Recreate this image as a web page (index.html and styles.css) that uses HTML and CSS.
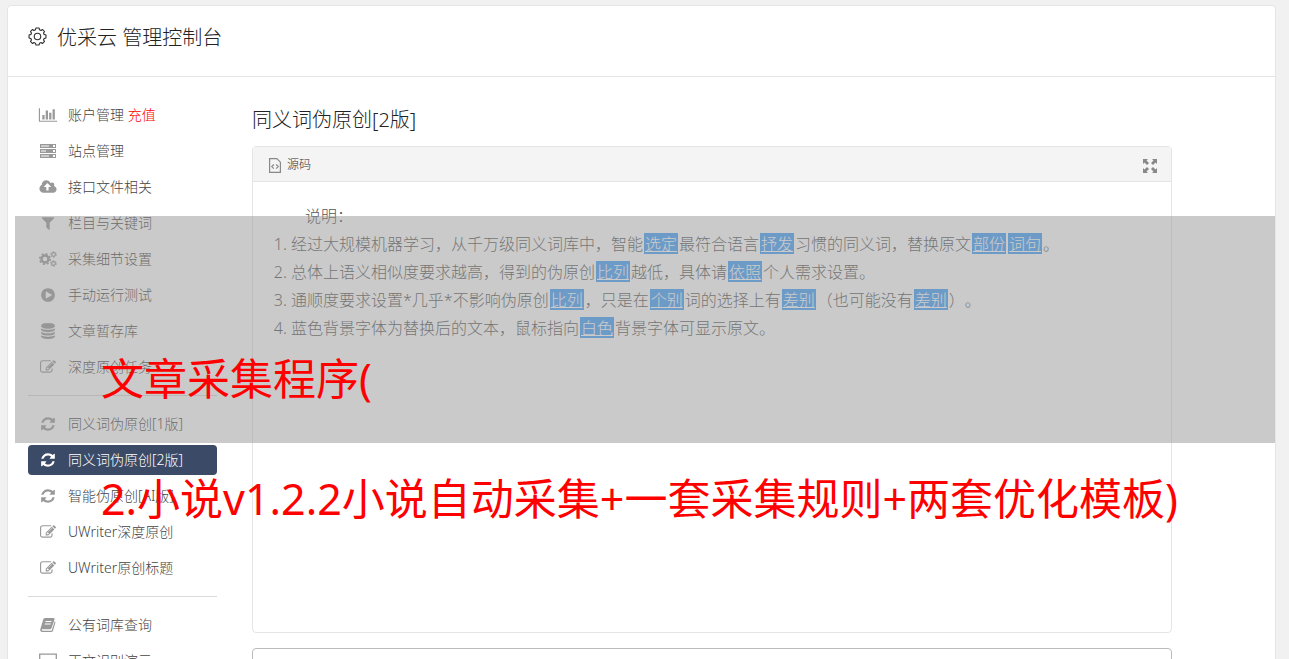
FILE: index.html
```html
<!DOCTYPE html>
<html lang="zh-CN">
<head>
    <meta charset="UTF-8">
    <meta name="viewport" content="width=device-width, initial-scale=1.0">
    <title>优采云 管理控制台</title>
    <link rel="stylesheet" href="styles.css">
</head>
<body>

    <!-- shared icons -->
    <svg class="icon-defs" aria-hidden="true">
        <symbol id="i-gear" viewBox="-10 -10 20 20">
            <path d="M-1.6-8.9H1.6L2.2-7 3.7-6.3 5.2-7.4 7.4-5.2 6.3-3.7 7-2.2 8.9-1.6V1.6L7 2.2 6.3 3.7 7.4 5.2 5.2 7.4 3.7 6.3 2.2 7 1.6 8.9H-1.6L-2.2 7-3.7 6.3-5.2 7.4-7.4 5.2-6.3 3.7-7 2.2-8.9 1.6V-1.6L-7-2.2-6.3-3.7-7.4-5.2-5.2-7.4-3.7-6.3-2.2-7Z" fill="none" stroke="currentColor" stroke-width="1.2" stroke-linejoin="round"/>
            <circle r="3.4" fill="none" stroke="currentColor" stroke-width="1.2"/>
        </symbol>
        <symbol id="i-chart" viewBox="0 0 2048 1792">
            <path d="M640 896v512h-256v-512h256zm384-512v1024h-256v-1024h256zm1024 1152v128h-2048v-1536h128v1408h1920zm-640-896v768h-256v-768h256zm384-384v1152h-256v-1152h256z"/>
        </symbol>
        <symbol id="i-server" viewBox="0 0 18 16">
            <path fill-rule="evenodd" d="M1 1h16v4H1zM2 2.500h8v1H2zM14 2v2h2V2zM1 6h16v4H1zM2 7.500h5v1H2zM14 7v2h2V7zM1 11h16v4H1zM2 12.500h8v1H2zM14 12v2h2v-2z"/>
        </symbol>
        <symbol id="i-cloud" viewBox="0 0 1920 1792">
            <path d="M1280 864q0-14-9-23l-352-352q-9-9-23-9t-23 9l-351 351q-10 12-10 24 0 14 9 23t23 9h224v352q0 13 9.500 22.500t22.500 9.500h192q13 0 22.500-9.500t9.500-22.500v-352h224q13 0 22.500-9.500t9.500-22.500zm640 288q0 159-112.500 271.500t-271.500 112.500h-1088q-185 0-316.500-131.500t-131.500-316.500q0-130 70-240t188-165q-2-30-2-43 0-212 150-362t362-150q156 0 285.500 87t188.500 231q71-62 166-62 106 0 181 75t75 181q0 76-41 138 130 31 213.500 135.500t83.500 238.500z"/>
        </symbol>
        <symbol id="i-filter" viewBox="0 0 1792 1792">
            <path d="M1595 295q17 41-14 70l-493 493v742q0 42-39 59-13 5-25 5-27 0-45-19l-256-256q-19-19-19-45v-486l-493-493q-31-29-14-70 17-39 59-39h1280q42 0 59 39z"/>
        </symbol>
        <symbol id="i-cogs" viewBox="0 0 18 16">
            <g fill="none" stroke="currentColor">
                <circle cx="6" cy="8" r="3.500" stroke-width="2.400"/>
                <circle cx="6" cy="8" r="5.200" stroke-width="1.600" stroke-dasharray="2.040 2.040"/>
                <circle cx="14.500" cy="3.500" r="1.800" stroke-width="1.200"/>
                <circle cx="14.500" cy="3.500" r="2.800" stroke-width="1" stroke-dasharray="1.470 1.460"/>
                <circle cx="14.500" cy="12.500" r="1.800" stroke-width="1.200"/>
                <circle cx="14.500" cy="12.500" r="2.800" stroke-width="1" stroke-dasharray="1.470 1.460"/>
            </g>
        </symbol>
        <symbol id="i-play" viewBox="0 0 1792 1792">
            <path d="M896 128q209 0 385.500 103t279.500 279.500 103 385.500-103 385.500-279.500 279.500-385.500 103-385.500-103-279.500-279.500-103-385.500 103-385.500 279.500-279.500 385.500-103zm384 823q32-18 32-55t-32-55l-544-320q-31-19-64-1-32 19-32 56v640q0 37 32 56 16 8 32 8 17 0 32-9z"/>
        </symbol>
        <symbol id="i-database" viewBox="0 0 1792 1792">
            <path d="M896 768q237 0 443-43t325-127v170q0 69-103 128t-280 93.500-385 34.500-385-34.500-280-93.500-103-128v-170q119 84 325 127t443 43zm0 768q237 0 443-43t325-127v170q0 69-103 128t-280 93.500-385 34.500-385-34.500-280-93.500-103-128v-170q119 84 325 127t443 43zm0-384q237 0 443-43t325-127v170q0 69-103 128t-280 93.500-385 34.500-385-34.500-280-93.500-103-128v-170q119 84 325 127t443 43zm0-1152q208 0 385 34.500t280 93.500 103 128v128q0 69-103 128t-280 93.500-385 34.500-385-34.500-280-93.500-103-128v-128q0-69 103-128t280-93.500 385-34.500z"/>
        </symbol>
        <symbol id="i-edit" viewBox="0 0 1792 1792">
            <path d="M888 1184l116-116-152-152-116 116v56h96v96h56zm440-720q-16-16-33 1l-350 350q-17 17-1 33t33-1l350-350q17-17 1-33zm80 594v190q0 119-84.500 203.500t-203.500 84.500h-832q-119 0-203.500-84.500t-84.500-203.500v-832q0-119 84.500-203.500t203.500-84.500h832q63 0 117 25 15 7 18 23 3 17-9 29l-49 49q-14 14-32 8-23-6-45-6h-832q-66 0-113 47t-47 113v832q0 66 47 113t113 47h832q66 0 113-47t47-113v-126q0-13 9-22l64-64q15-15 35-7t20 29zm-96-738l288 288-672 672h-288v-288zm444 132l-92 92-288-288 92-92q28-28 68-28t68 28l152 152q28 28 28 68t-28 68z"/>
        </symbol>
        <symbol id="i-refresh" viewBox="0 0 1792 1792">
            <path d="M1639 1056q0 5-1 7-64 268-268 434.500t-478 166.500q-146 0-282.500-55t-243.500-157l-129 129q-19 19-45 19t-45-19-19-45v-448q0-26 19-45t45-19h448q26 0 45 19t19 45-19 45l-137 137q71 66 161 102t187 36q134 0 250-65t186-179q11-17 53-117 8-23 30-23h192q13 0 22.500 9.500t9.500 22.500zm25-800v448q0 26-19 45t-45 19h-448q-26 0-45-19t-19-45 19-45l138-138q-148-137-349-137-134 0-250 65t-186 179q-11 17-53 117-8 23-30 23h-199q-13 0-22.500-9.500t-9.500-22.500v-7q65-268 270-434.500t480-166.500q146 0 284 55.500t245 156.500l130-129q19-19 45-19t45 19 19 45z"/>
        </symbol>
        <symbol id="i-book" viewBox="0 0 18 16">
            <path fill-rule="evenodd" d="M6 1h8.500q1.500 0 1 1.500L12.600 11q-.4 1.200-1.600 1.200H3.300q-.8 0-.6.8.2.8 1.100.8h8q.8 0 1.100-.9l2.800-8.700q1 .4.700 1.400L14 13.700q-.5 1.300-1.900 1.300H3.600Q1 15 1.200 12.500L4.200 2.600Q4.600 1 6 1zM6.600 4l-.3 1h6l.3-1zM5.900 6.500l-.3 1h6l.3-1z"/>
        </symbol>
        <symbol id="i-screen" viewBox="0 0 18 16">
            <path fill="none" stroke="currentColor" stroke-width="1.300" d="M.7 1.200h16.600v10.500H.7zM9 12v2.500M5 14.500h8"/>
        </symbol>
        <symbol id="i-code" viewBox="0 0 12 15">
            <path fill="none" stroke="currentColor" stroke-width="1.200" d="M.6.6h7.200l3.600 3.600v10.200H.6zM4.800 6.500 2.800 8.600l2 2.100M7.200 6.500l2 2.100-2 2.100"/>
        </symbol>
        <symbol id="i-expand" viewBox="0 0 14 14">
            <path d="M0 0h5L3.500 1.500 6 4 4 6 1.500 3.500 0 5zM14 0v5l-1.500-1.500L10 6 8 4l2.500-2.500L9 0zM0 14V9l1.500 1.500L4 8l2 2-2.500 2.500L5 14zM14 14H9l1.500-1.500L8 10l2-2 2.500 2.500L14 9z"/>
        </symbol>
    </svg>

    <div class="console">
        <header class="console-header">
            <svg class="gear"><use href="#i-gear"/></svg>
            <h1>优采云 管理控制台</h1>
        </header>

        <div class="console-body">
            <nav class="sidebar">
                <a href="#"><svg><use href="#i-chart"/></svg><span>账户管理 <em>充值</em></span></a>
                <a href="#"><svg><use href="#i-server"/></svg>站点管理</a>
                <a href="#"><svg><use href="#i-cloud"/></svg>接口文件相关</a>
                <a href="#"><svg><use href="#i-filter"/></svg>栏目与关键词</a>
                <a href="#"><svg><use href="#i-cogs"/></svg>采集细节设置</a>
                <a href="#"><svg><use href="#i-play"/></svg>手动运行测试</a>
                <a href="#"><svg><use href="#i-database"/></svg>文章暂存库</a>
                <a href="#"><svg><use href="#i-edit"/></svg>深度原创任务</a>
                <hr>
                <a href="#"><svg><use href="#i-refresh"/></svg>同义词伪原创[1版]</a>
                <a href="#" class="active"><svg><use href="#i-refresh"/></svg>同义词伪原创[2版]</a>
                <a href="#"><svg><use href="#i-refresh"/></svg>智能伪原创[AI版]</a>
                <a href="#"><svg><use href="#i-edit"/></svg>UWriter深度原创</a>
                <a href="#"><svg><use href="#i-edit"/></svg>UWriter原创标题</a>
                <hr>
                <a href="#"><svg><use href="#i-book"/></svg>公有词库查询</a>
                <a href="#"><svg><use href="#i-screen"/></svg>正文识别演示</a>
            </nav>

            <main class="content">
                <h2>同义词伪原创[2版]</h2>

                <section class="editor">
                    <div class="toolbar">
                        <button type="button"><svg class="code"><use href="#i-code"/></svg>源码</button>
                        <button type="button" aria-label="全屏"><svg class="expand"><use href="#i-expand"/></svg></button>
                    </div>
                    <div class="editor-text">
                        <p>说明：</p>
                        <ol>
                            <li>经过大规模机器学习，从千万级同义词库中，智能<mark>选定</mark>最符合语言<mark>抒发</mark>习惯的同义词，替换原文<mark>部份</mark><mark>词句</mark>。</li>
                            <li>总体上语义相似度要求越高，得到的伪原创<mark>比列</mark>越低，具体请<mark>依照</mark>个人需求设置。</li>
                            <li>通顺度要求设置*几乎*不影响伪原创<mark>比列</mark>，只是在<mark>个别</mark>词的选择上有<mark>差别</mark>（也可能没有<mark>差别</mark>）。</li>
                            <li>蓝色背景字体为替换后的文本，鼠标指向<mark>白色</mark>背景字体可显示原文。</li>
                        </ol>
                    </div>
                </section>

                <textarea class="source" aria-label="原文"></textarea>
            </main>
        </div>
    </div>

    <!-- title laid over the console -->
    <div class="band"></div>
    <div class="caption">
        <p>文章采集程序(</p>
        <p>2.小说v1.2.2小说自动采集+一套采集规则+两套优化模板)</p>
    </div>

</body>
</html>
```
FILE: styles.css
```css
* {
    box-sizing: border-box;
}
body {
    position: relative;
    margin: 0;
    padding: 5px 13px 0 7px;
    background-color: #f1f1f1;
    color: #444;
    font-family: "Noto Sans", "Noto Sans CJK SC", sans-serif;
    font-size: 14px;
    font-weight: 300;
    text-spacing-trim: space-all;
}
h1, h2, p, ol {
    margin: 0;
    font-weight: 300;
}
svg {
    fill: currentColor;
}
.icon-defs {
    display: none;
}
.console {
    background-color: #fff;
    border: 1px solid #e5e5e5;
    border-radius: 4px;
}
.console-header {
    display: flex;
    align-items: center;
    gap: 10px;
    height: 71px;
    padding: 0 20px 6px;
    border-bottom: 1px solid #e5e5e5;
    color: #333;
}
.console-header h1,
.content h2 {
    font-size: 20px;
    line-height: 28px;
    color: #222;
}
.gear {
    width: 19px;
    height: 19px;
    margin-bottom: 4px;
}
.console-body {
    display: flex;
    gap: 35px;
    padding: 23px 103px 40px 20px;
}

/* sidebar */
.sidebar {
    display: flex;
    flex-direction: column;
    flex: none;
    gap: 6px;
    width: 189px;
}
.sidebar a {
    display: flex;
    align-items: center;
    gap: 10px;
    height: 30px;
    padding: 0 10px 2px;
    border-radius: 4px;
    color: #444;
    text-decoration: none;
    white-space: nowrap;
}
.sidebar svg {
    width: 20px;
    height: 16px;
    margin-top: 2px;
    color: #999;
}
.sidebar em {
    color: #f00;
    font-style: normal;
}
.sidebar .active,
.sidebar .active svg {
    color: #fff;
}
.sidebar .active {
    background-color: #3b4a66;
}
.sidebar hr {
    width: 100%;
    margin: 7px 0;
    border: 0;
    border-top: 1px solid #d9d9d9;
}

/* editor */
.content {
    flex: 1;
    min-width: 0;
}
.content h2 {
    padding: 6px 0 12px;
}
.editor {
    min-height: 487px;
    border: 1px solid #e5e5e5;
    border-radius: 4px;
}
.toolbar {
    display: flex;
    align-items: center;
    justify-content: space-between;
    height: 35px;
    padding: 0 14px 0 16px;
    border-bottom: 1px solid #e5e5e5;
    background-color: #f4f4f4;
}
.toolbar button {
    display: flex;
    align-items: center;
    gap: 6px;
    padding: 0;
    border: 0;
    background: none;
    color: #333;
    font: inherit;
    font-size: 12px;
}
.toolbar svg {
    margin-top: 3px;
    color: #888;
}
.code {
    width: 12px;
    height: 15px;
}
.expand {
    width: 14px;
    height: 14px;
}
.editor-text {
    padding: 20px;
    font-size: 16px;
    line-height: 28px;
    color: #555;
}
.editor-text p {
    text-indent: 2em;
}
.editor-text ol {
    padding-left: 18px;
}
.editor-text mark {
    display: inline-block;
    margin: 0 1px;
    padding: 2px 1px 0;
    background-color: #45a0fa;
    color: #fff;
    line-height: 19px;
    text-decoration: underline;
}
.source {
    display: block;
    width: 100%;
    height: 300px;
    margin-top: 15px;
    border: 1px solid #bbb;
    border-radius: 4px;
    resize: none;
}

/* overlay */
.band {
    position: absolute;
    top: 216px;
    right: 14px;
    left: 15px;
    height: 227px;
    background-color: rgba(150, 150, 150, 0.5);
}
.caption {
    position: absolute;
    top: 319px;
    left: 101px;
    color: #f00;
    font-size: 43px;
    line-height: 120px;
    white-space: nowrap;
}
.caption p {
    font-weight: 400;
}
```
